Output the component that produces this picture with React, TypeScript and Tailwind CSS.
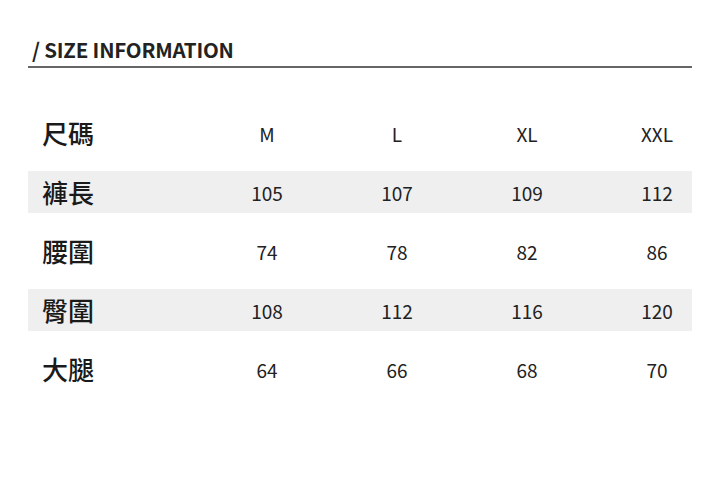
import React from "react"

const sizes = ["M", "L", "XL", "XXL"]

const rows = [
  { label: "褲長", values: ["105", "107", "109", "112"] },
  { label: "腰圍", values: ["74", "78", "82", "86"] },
  { label: "臀圍", values: ["108", "112", "116", "120"] },
  { label: "大腿", values: ["64", "66", "68", "70"] },
]

const font = { fontFamily: '"Noto Sans CJK TC", "Noto Sans", sans-serif' }

function Row({ label, values, shaded }: { label: string; values: string[]; shaded: boolean }) {
  return (
    <div
      className={`grid grid-cols-[174px_130px_130px_130px_1fr] items-center h-[42px] ${
        shaded ? "bg-[#efefef]" : ""
      }`}
    >
      <div className="pl-[14px] text-[26px] font-medium leading-none text-[#1a1a1a]">{label}</div>
      {values.map((v, i) => (
        <div
          key={i}
          className={`text-center text-[19px] leading-none text-[#222] ${i === 3 ? "pl-[30px]" : ""}`}
        >
          {v}
        </div>
      ))}
    </div>
  )
}

export default function App() {
  return (
    <div className="w-[720px] h-[486px] bg-white px-[28px] pt-[36px]" style={font}>
      <div className="border-b-2 border-[#666] pb-[4px] pl-[4px]">
        <h2 className="text-[20.5px] font-bold leading-[26px] text-[#222] tracking-[-0.2px]">/ SIZE INFORMATION</h2>
      </div>

      <div className="mt-[44px] flex flex-col gap-[17px]">
        <Row label="尺碼" values={sizes} shaded={false} />
        {rows.map((r, i) => (
          <Row key={r.label} label={r.label} values={r.values} shaded={i % 2 === 0} />
        ))}
      </div>
    </div>
  )
}
